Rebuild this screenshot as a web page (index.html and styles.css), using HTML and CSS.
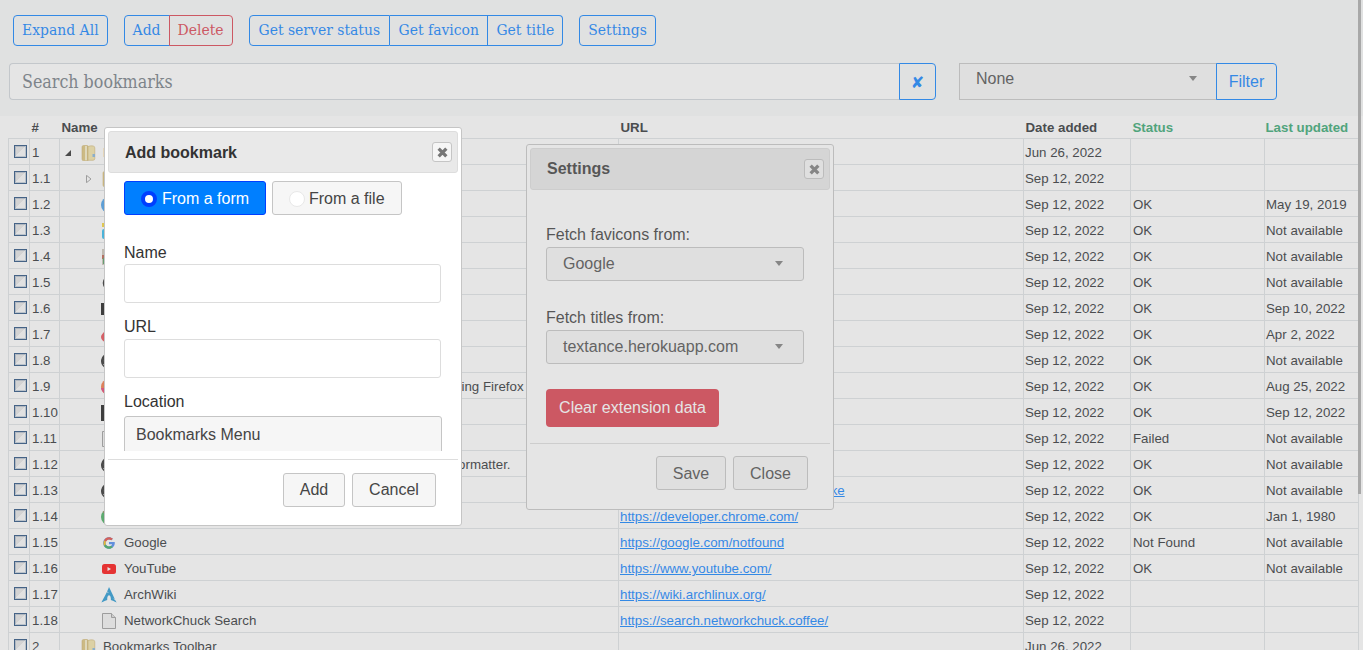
FILE: index.html
```html
<!DOCTYPE html>
<html lang="en">
<head>
<meta charset="utf-8">
<title>Bookmarks</title>
<link rel="stylesheet" href="styles.css">
</head>
<body>
<svg class="defs" width="0" height="0" aria-hidden="true">
  <symbol id="folder" viewBox="0 0 16 16">
    <path d="M2 2Q2 .5 3.500 .5H7q1 0 1 1v14q-2 .5-4.500.3Q2 15.700 2 14z" fill="#dcc274" stroke="#c9ad62" stroke-width=".6"/>
    <path d="M8 1.500q2-1 5-.6 1.800.3 1.800 2v10.600q0 1.800-1.800 1.800H8z" fill="#f2e2a4" stroke="#c9ad62" stroke-width=".6"/>
    <path d="M5 1h2v14.300H5z" fill="#f7edc4"/>
    <rect x="12.500" y="9" width="2.500" height="3" fill="#7fb2dc"/>
  </symbol>
  <symbol id="doc" viewBox="0 0 16 16">
    <path d="M1.500 .5h9l4 4v11h-13z" fill="#f4f4f4" stroke="#999"/>
    <path d="M10.500 .5v4h4" fill="#ddd" stroke="#999"/>
  </symbol>
  <symbol id="github" viewBox="0 0 16 16">
    <path d="M8 0a8 8 0 0 0-2.500 15.600c.4.100.5-.2.500-.4v-1.400c-2.200.5-2.700-1-2.700-1-.4-.9-.9-1.200-.9-1.200-.7-.5.100-.5.100-.5.800.100 1.200.8 1.200.8.700 1.200 1.900.9 2.300.7.100-.5.300-.9.500-1.100-1.800-.2-3.600-.9-3.600-4 0-.9.300-1.600.8-2.100-.1-.2-.4-1 .1-2.100 0 0 .7-.2 2.200.8a7.600 7.600 0 0 1 4 0c1.500-1 2.200-.8 2.200-.8.500 1.100.2 1.900.1 2.100.5.600.8 1.300.8 2.100 0 3.100-1.900 3.800-3.600 4 .3.200.6.700.6 1.500v2.200c0 .2.100.5.500.4A8 8 0 0 0 8 0z" fill="#222"/>
  </symbol>
</svg>

<header class="topbar">
  <div class="toolbar">
    <div class="btn-group"><button class="tbtn">Expand All</button></div>
    <div class="btn-group"><button class="tbtn">Add</button><button class="tbtn danger">Delete</button></div>
    <div class="btn-group"><button class="tbtn wide">Get server status</button><button class="tbtn mid">Get favicon</button><button class="tbtn">Get title</button></div>
    <div class="btn-group"><button class="tbtn">Settings</button></div>
  </div>
  <div class="searchrow">
    <div class="searchbox">
      <input class="search" type="text" placeholder="Search bookmarks">
      <button class="clear" aria-label="Clear">✘</button>
    </div>
    <div class="filterbox">
      <div class="menu filtermenu"><span>None</span><i class="caret"></i></div>
      <button class="filterbtn">Filter</button>
    </div>
  </div>
</header>

<table class="bm">
  <colgroup><col class="c-check"><col class="c-num"><col class="c-name"><col class="c-url"><col class="c-date"><col class="c-status"><col class="c-upd"></colgroup>
  <thead>
    <tr><th></th><th>#</th><th>Name</th><th>URL</th><th>Date added</th><th class="ok">Status</th><th class="ok">Last updated</th></tr>
  </thead>
  <tbody>
    <tr><td><span class="cb"></span></td><td>1</td><td><div class="nm"><svg class="arrow" viewBox="0 0 8 8"><path d="M6 1v6H0z" fill="#222"/></svg><svg class="ic"><use href="#folder"/></svg><span>Bookmarks Menu</span></div></td><td></td><td>Jun 26, 2022</td><td></td><td></td></tr>
    <tr><td><span class="cb"></span></td><td>1.1</td><td><div class="nm l1"><svg class="arrow" viewBox="0 0 8 8"><path d="M.5 .3L5 4 .5 7.700z" fill="none" stroke="#999"/></svg><svg class="ic"><use href="#folder"/></svg><span>Mozilla Firefox</span></div></td><td></td><td>Sep 12, 2022</td><td></td><td></td></tr>
    <tr><td><span class="cb"></span></td><td>1.2</td><td><div class="nm l1"><i class="arrow"></i><svg class="ic" viewBox="0 0 16 16"><circle cx="8" cy="8" r="8" fill="#3d9ae8"/></svg><span>Fedora Docs</span></div></td><td><a href="#">https://docs.fedoraproject.org/</a></td><td>Sep 12, 2022</td><td>OK</td><td>May 19, 2019</td></tr>
    <tr><td><span class="cb"></span></td><td>1.3</td><td><div class="nm l1"><i class="arrow"></i><svg class="ic" viewBox="0 0 16 16"><rect x="1" y="0" width="10" height="4" fill="#f7d32a"/><rect x="1" y="6" width="12" height="10" rx="2" fill="#22b8ee"/></svg><span>Linktree</span></div></td><td><a href="#">https://linktr.ee/</a></td><td>Sep 12, 2022</td><td>OK</td><td>Not available</td></tr>
    <tr><td><span class="cb"></span></td><td>1.4</td><td><div class="nm l1"><i class="arrow"></i><svg class="ic" viewBox="0 0 16 16"><rect x="1" width="14" height="16" fill="#c9c2b5"/><rect x="1" y="6" width="5" height="4" fill="#b85a44"/><rect x="2" y="9" width="5" height="6" fill="#4a9a5a"/></svg><span>Photos</span></div></td><td><a href="#">https://example.org/photos</a></td><td>Sep 12, 2022</td><td>OK</td><td>Not available</td></tr>
    <tr><td><span class="cb"></span></td><td>1.5</td><td><div class="nm l1"><i class="arrow"></i><svg class="ic" viewBox="0 0 16 16"><circle cx="9" cy="8" r="6.500" fill="none" stroke="#222" stroke-width="1.600"/></svg><span>Open Source</span></div></td><td><a href="#">https://opensource.org/</a></td><td>Sep 12, 2022</td><td>OK</td><td>Not available</td></tr>
    <tr><td><span class="cb"></span></td><td>1.6</td><td><div class="nm l1"><i class="arrow"></i><svg class="ic" viewBox="0 0 16 16"><rect x="0" y="2" width="15" height="12" fill="#111"/></svg><span>Terminal</span></div></td><td><a href="#">https://terminal.sexy/</a></td><td>Sep 12, 2022</td><td>OK</td><td>Sep 10, 2022</td></tr>
    <tr><td><span class="cb"></span></td><td>1.7</td><td><div class="nm l1"><i class="arrow"></i><svg class="ic" viewBox="0 0 16 16"><path d="M8 1c4 4 7 6 7 9a7 5.500 0 0 1-14 0c0-2 2-4 3-5z" fill="#e8404a" transform="translate(-1)"/></svg><span>Arc</span></div></td><td><a href="#">https://arc.example.net/</a></td><td>Sep 12, 2022</td><td>OK</td><td>Apr 2, 2022</td></tr>
    <tr><td><span class="cb"></span></td><td>1.8</td><td><div class="nm l1"><i class="arrow"></i><svg class="ic"><use href="#github"/></svg><span>GitHub</span></div></td><td><a href="#">https://github.com/</a></td><td>Sep 12, 2022</td><td>OK</td><td>Not available</td></tr>
    <tr><td><span class="cb"></span></td><td>1.9</td><td><div class="nm l1"><i class="arrow"></i><svg class="ic" viewBox="0 0 16 16"><circle cx="8" cy="8" r="8" fill="#f3703a"/><path d="M0 9a8 8 0 0 0 5 6V9z" fill="#e6366e"/></svg><span>Firefox Add-ons: Top extensions and themes for customizing Firefox</span></div></td><td><a href="#">https://addons.mozilla.org/</a></td><td>Sep 12, 2022</td><td>OK</td><td>Aug 25, 2022</td></tr>
    <tr><td><span class="cb"></span></td><td>1.10</td><td><div class="nm l1"><i class="arrow"></i><svg class="ic" viewBox="0 0 16 16"><rect x="0" width="15" height="16" fill="#111"/></svg><span>Notes</span></div></td><td><a href="#">https://notes.example.org/</a></td><td>Sep 12, 2022</td><td>OK</td><td>Sep 12, 2022</td></tr>
    <tr><td><span class="cb"></span></td><td>1.11</td><td><div class="nm l1"><i class="arrow"></i><svg class="ic"><use href="#doc"/></svg><span>Old page</span></div></td><td><a href="#">https://old.example.org/</a></td><td>Sep 12, 2022</td><td>Failed</td><td>Not available</td></tr>
    <tr><td><span class="cb"></span></td><td>1.12</td><td><div class="nm l1"><i class="arrow"></i><svg class="ic"><use href="#github"/></svg><span>GitHub - prettier/prettier: Prettier is an opinionated code formatter.</span></div></td><td><a href="#">https://github.com/prettier/prettier</a></td><td>Sep 12, 2022</td><td>OK</td><td>Not available</td></tr>
    <tr><td><span class="cb"></span></td><td>1.13</td><td><div class="nm l1"><i class="arrow"></i><svg class="ic"><use href="#github"/></svg><span>GitHub - cmake</span></div></td><td><a href="#">https://github.com/dot/awesome-make</a></td><td>Sep 12, 2022</td><td>OK</td><td>Not available</td></tr>
    <tr><td><span class="cb"></span></td><td>1.14</td><td><div class="nm l1"><i class="arrow"></i><svg class="ic" viewBox="0 0 16 16"><circle cx="8" cy="8" r="8" fill="#3cab57"/><path d="M2 3a8 8 0 0 1 12 0l-6 5z" fill="#e2483b"/></svg><span>Chrome Developers</span></div></td><td><a href="#">https://developer.chrome.com/</a></td><td>Sep 12, 2022</td><td>OK</td><td>Jan 1, 1980</td></tr>
    <tr><td><span class="cb"></span></td><td>1.15</td><td><div class="nm l1"><i class="arrow"></i><svg class="ic" viewBox="0 0 48 48"><path d="M43.600 20.100H24v8.500h11.300C33.700 33.600 29.300 36.500 24 36.500c-6.900 0-12.500-5.600-12.500-12.500S17.100 11.500 24 11.500c3.100 0 6 1.200 8.200 3l6-6C34.500 5.100 29.500 3 24 3 12.400 3 3 12.400 3 24s9.400 21 21 21 21-9.400 21-21c0-1.400-.1-2.700-.4-3.900z" fill="#4285f4" transform="translate(4 4) scale(.83)"/><path d="M6.300 14.700l7 5.100C15.100 15.100 19.200 11.500 24 11.500c3.100 0 6 1.200 8.200 3l6-6C34.500 5.100 29.500 3 24 3 16 3 9.100 7.500 6.300 14.700z" fill="#ea4335" transform="translate(4 4) scale(.83)"/><path d="M24 45c5.400 0 10.300-2.100 14-5.400l-6.500-5.500c-2 1.500-4.600 2.400-7.500 2.400-5.200 0-9.700-3.300-11.300-8l-7 5.400C9 40.400 15.900 45 24 45z" fill="#34a853" transform="translate(4 4) scale(.83)"/><path d="M6.300 14.700C4 18.700 4 28.500 5.700 33.900l7-5.400c-1.400-3.500-1.400-5.200.6-8.700z" fill="#fbbc05" transform="translate(4 4) scale(.83)"/></svg><span>Google</span></div></td><td><a href="#">https://google.com/notfound</a></td><td>Sep 12, 2022</td><td>Not Found</td><td>Not available</td></tr>
    <tr><td><span class="cb"></span></td><td>1.16</td><td><div class="nm l1"><i class="arrow"></i><svg class="ic" viewBox="0 0 16 16"><rect x="1" y="3" width="14" height="10" rx="2.500" fill="#f00"/><path d="M6.500 6v4L10 8z" fill="#fff"/></svg><span>YouTube</span></div></td><td><a href="#">https://www.youtube.com/</a></td><td>Sep 12, 2022</td><td>OK</td><td>Not available</td></tr>
    <tr><td><span class="cb"></span></td><td>1.17</td><td><div class="nm l1"><i class="arrow"></i><svg class="ic" viewBox="0 0 16 16"><path d="M8 0C7.300 1.700 6.900 2.800 6.100 4.500c.5.500 1.100 1.100 2 1.800-1-.4-1.700-.8-2.200-1.300C4.900 7 3.400 9.900.4 15.600c2.400-1.400 4.200-2.200 5.900-2.600-.1-.3-.1-.7-.1-1 0-2.200 1-3.900 2-3.800 1 .1 1.800 2 1.700 4.200 0 .1 0 .3-.1.600 1.700.4 3.500 1.200 5.800 2.600-.5-.9-.9-1.700-1.300-2.400-.7-.5-1.400-1.200-2.900-2 1 .3 1.800.6 2.300.9C11.900 7.900 10.300 4.500 8 0z" fill="#1793d1"/></svg><span>ArchWiki</span></div></td><td><a href="#">https://wiki.archlinux.org/</a></td><td>Sep 12, 2022</td><td></td><td></td></tr>
    <tr><td><span class="cb"></span></td><td>1.18</td><td><div class="nm l1"><i class="arrow"></i><svg class="ic"><use href="#doc"/></svg><span>NetworkChuck Search</span></div></td><td><a href="#">https://search.networkchuck.coffee/</a></td><td>Sep 12, 2022</td><td></td><td></td></tr>
    <tr><td><span class="cb"></span></td><td>2</td><td><div class="nm"><i class="arrow"></i><svg class="ic"><use href="#folder"/></svg><span>Bookmarks Toolbar</span></div></td><td></td><td>Jun 26, 2022</td><td></td><td></td></tr>
  </tbody>
</table>

<section class="dialog settings">
  <div class="titlebar"><span>Settings</span><button class="x" aria-label="Close"><svg width="11" height="11" viewBox="0 0 10 10"><path d="M1.500 1.500l7 7m0-7l-7 7" stroke="#777" stroke-width="3"/></svg></button></div>
  <div class="settings-body">
    <label class="slabel first">Fetch favicons from:</label>
    <div class="menu smenu"><span>Google</span><i class="caret"></i></div>
    <label class="slabel second">Fetch titles from:</label>
    <div class="menu smenu"><span>textance.herokuapp.com</span><i class="caret"></i></div>
    <button class="cleardata">Clear extension data</button>
  </div>
  <div class="footer settings-footer"><button class="uibtn save">Save</button><button class="uibtn close">Close</button></div>
</section>

<div class="overlay"></div>
<div class="scrollthumb"></div>

<section class="dialog addbm">
  <div class="titlebar"><span>Add bookmark</span><button class="x" aria-label="Close"><svg width="11" height="11" viewBox="0 0 10 10"><path d="M1.500 1.500l7 7m0-7l-7 7" stroke="#777" stroke-width="3"/></svg></button></div>
  <div class="add-body">
    <div class="radios">
      <span class="radio on"><i class="dot"></i>From a form</span>
      <span class="radio"><i class="dot"></i>From a file</span>
    </div>
    <label class="flabel name">Name</label>
    <input class="field" type="text">
    <label class="flabel url">URL</label>
    <input class="field" type="text">
    <label class="flabel loc">Location</label>
    <div class="locmenu">Bookmarks Menu</div>
  </div>
  <div class="footer add-footer"><button class="uibtn add">Add</button><button class="uibtn cancel">Cancel</button></div>
</section>
</body>
</html>
```
FILE: styles.css
```css
* { box-sizing: border-box; }
html, body { margin: 0; height: 650px; overflow: hidden; }
body {
  position: relative;
  background: #fff;
  color: #212529;
  font-family: "Liberation Sans", Arial, sans-serif;
  font-size: 13.3px;
}
.defs { position: absolute; }
button { font-family: inherit; cursor: default; margin: 0; }

/* top bar */
.topbar { background: #f8f9fa; height: 116px; padding: 15px 9px 0 9px; }
.toolbar { display: flex; gap: 16px; padding-left: 4px; height: 31px; }
.btn-group { display: flex; }
.tbtn {
  font-family: "DejaVu Serif Condensed", "DejaVu Serif", serif;
  font-stretch: condensed;
  font-size: 15.5px;
  height: 31px;
  padding: 0 8px 2px;
  color: #007bff;
  background: transparent;
  border: 1px solid #007bff;
  border-left-width: 0;
}
.tbtn.wide { padding: 0 9px 2px; }
.tbtn.mid { padding: 0 8.5px 2px; }
.tbtn:first-child { border-left-width: 1px; border-radius: 4px 0 0 4px; }
.tbtn:last-child { border-radius: 0 4px 4px 0; }
.tbtn:only-child { border-radius: 4px; }
.tbtn.danger { color: #dc3545; border-color: #dc3545; border-left-width: 1px; margin-left: -1px; }

.searchrow { display: flex; margin-top: 17px; height: 37px; }
.searchbox { display: flex; width: 927px; }
.search {
  flex: 1;
  min-width: 0;
  height: 37px;
  padding: 0 12px;
  font-family: "DejaVu Serif Condensed", "DejaVu Serif", serif;
  font-stretch: condensed;
  font-size: 17.7px;
  border: 1px solid #ced4da;
  border-right: 0;
  border-radius: 4px 0 0 4px;
  background: #fff;
}
.search::placeholder { color: #6c757d; opacity: 1; }
.clear {
  width: 37px;
  height: 37px;
  background: transparent;
  border: 1px solid #007bff;
  border-radius: 0 4px 4px 0;
  padding: 2px 0 0;
  font-family: "DejaVu Sans", sans-serif;
  font-size: 16px;
  color: #007bff;
}
.filterbox { display: flex; margin-left: 23px; }
.menu {
  display: flex;
  justify-content: space-between;
  background: #f6f6f6;
  border: 1px solid #c5c5c5;
  color: #454545;
  font-size: 16px;
}
.filtermenu { width: 258px; height: 37px; padding: 6px 19px 0 16px; }
.caret {
  width: 0;
  height: 0;
  margin-top: 6px;
  border-left: 4.5px solid transparent;
  border-right: 4.5px solid transparent;
  border-top: 5px solid #777;
}
.filterbtn {
  width: 61px;
  height: 37px;
  margin-left: -1px;
  font-size: 16px;
  color: #007bff;
  background: transparent;
  border: 1px solid #007bff;
  border-radius: 0 4px 4px 0;
}

/* table */
.bm { border-collapse: collapse; table-layout: fixed; width: 1350px; margin-left: 8px; }
.c-check { width: 21px; }
.c-num { width: 30px; }
.c-name { width: 559px; }
.c-url { width: 405px; }
.c-date { width: 107px; }
.c-status { width: 134px; }
.c-upd { width: 94px; }
.bm th {
  height: 22px;
  padding: 2px 2px 0;
  text-align: left;
  font-size: 13.3px;
  font-weight: 700;
  border-bottom: 1px solid #dee2e6;
}
.bm th:nth-child(7) { padding-left: 1px; }
.bm th.ok { color: #2aa269; }
.bm td {
  height: 26px;
  padding: 3px 1px 0;
  white-space: nowrap;
  overflow: visible;
  border: 1px solid #dee2e6;
  border-top: 0;
}
.bm td:first-child { padding: 0 0 0 5px; }
.bm td:nth-child(2) { padding-left: 2px; }
.bm td:nth-child(6) { padding-left: 2px; }
.bm a { color: #007bff; }
.cb {
  display: block;
  width: 13px;
  height: 13px;
  border: 1px solid #1b4678;
  box-shadow: inset 0 0 0 1px rgba(27, 70, 120, .25);
  background: linear-gradient(135deg, #e6e6e6 0 50%, #fafafa 50% 100%);
}
.nm { display: flex; align-items: center; padding-left: 4px; }
.nm.l1 { padding-left: 25px; }
.arrow { display: block; width: 8px; height: 8px; flex: none; }
.ic { display: block; width: 16px; height: 16px; margin: 0 7px; flex: none; }

/* overlay */
.overlay { position: absolute; inset: 0; background: #aaa; opacity: .3; z-index: 2; }
.scrollthumb { position: absolute; right: 2px; top: 0; width: 3px; height: 494px; background: #a8a8a8; z-index: 3; }

/* dialogs */
.dialog {
  position: absolute;
  display: flex;
  flex-direction: column;
  background: #fff;
  border: 1px solid #c5c5c5;
  border-radius: 3px;
  padding: 3px;
  color: #333;
}
.addbm { left: 104px; top: 127px; width: 358px; height: 399px; z-index: 4; }
.settings { left: 526px; top: 144px; width: 308px; height: 366px; z-index: 1; }
.titlebar {
  display: flex;
  justify-content: space-between;
  align-items: center;
  flex: none;
  height: 42px;
  padding: 0 5px 0 16px;
  font-size: 16px;
  font-weight: 700;
  color: #333;
  background: #e9e9e9;
  border: 1px solid #ddd;
  border-radius: 3px;
}
.addbm .titlebar span { padding-top: 2px; }
.x {
  width: 20px;
  height: 20px;
  padding: 0;
  display: flex;
  align-items: center;
  justify-content: center;
  background: #f6f6f6;
  border: 1px solid #c5c5c5;
  border-radius: 3px;
}

.add-body { flex: none; height: 278px; padding: 8px 16px 0; overflow: hidden; }
.radios { display: flex; gap: 6px; }
.radio {
  display: flex;
  align-items: center;
  width: 130px;
  height: 34px;
  padding: 1px 16px 0;
  font-size: 16px;
  white-space: nowrap;
  color: #454545;
  background: #f6f6f6;
  border: 1px solid #c5c5c5;
  border-radius: 3px;
}
.radio.on { color: #fff; background: #007fff; border-color: #003eff; width: 142px; }
.dot {
  flex: none;
  width: 16px;
  height: 16px;
  margin-right: 4px;
  border-radius: 50%;
  background: #fff;
  border: 1px solid #e8e8e8;
}
.radio.on .dot { border: 4px solid #003eff; margin-right: 5px; }
.flabel { display: block; font-size: 16px; line-height: 20px; color: #333; }
.flabel.name { margin-top: 28px; }
.flabel.url { margin-top: 14px; }
.flabel.loc { margin-top: 14px; }
.field {
  display: block;
  width: 317px;
  height: 39px;
  margin-top: 1px;
  background: #fff;
  border: 1px solid #ddd;
  border-radius: 3px;
}
.url + .field { margin-top: 2px; }
.locmenu {
  width: 318px;
  height: 60px;
  margin-top: 4px;
  padding: 9px 11px;
  font-size: 16px;
  color: #454545;
  background: #f6f6f6;
  border: 1px solid #c5c5c5;
  border-radius: 3px;
}
.footer {
  display: flex;
  flex: none;
  justify-content: flex-end;
  gap: 7px;
  border-top: 1px solid #ddd;
}
.add-footer { margin-top: 8px; padding: 13px 22px 0 0; }
.uibtn {
  height: 34px;
  padding: 0;
  font-size: 16px;
  color: #454545;
  background: #f6f6f6;
  border: 1px solid #c5c5c5;
  border-radius: 3px;
}
.add { width: 62px; }
.cancel { width: 84px; }
.save { width: 70px; padding-top: 2px; }
.close { width: 75px; padding-top: 2px; }

.settings-body { flex: none; height: 253px; padding: 0 16px; }
.slabel { display: block; font-size: 16px; line-height: 20px; color: #333; }
.slabel.first { margin-top: 35px; }
.slabel.second { margin-top: 27px; }
.smenu { width: 258px; height: 34px; margin-top: 2px; padding: 7px 20px 0 16px; border-radius: 3px; }
.cleardata {
  display: block;
  height: 38px;
  width: 173px;
  margin-top: 25px;
  font-size: 16px;
  color: #fff;
  background: #dc3545;
  border: 0;
  border-radius: 4px;
}
.settings-footer { padding: 12px 22px 0 0; }
```
